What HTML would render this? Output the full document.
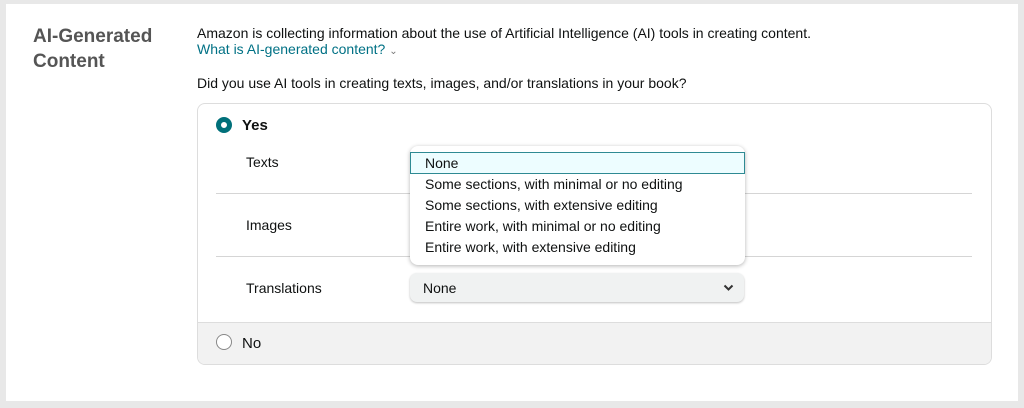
<!DOCTYPE html>
<html><head><style>
body{margin:0;width:1024px;height:408px;background:#e8e8e8;font-family:"Liberation Sans",Arial,sans-serif;color:#0f1111;position:relative;overflow:hidden}
.panel{position:absolute;left:6px;top:4px;width:1012px;height:397px;background:#fff}
.a{position:absolute;white-space:nowrap;font-size:14px}
h2{position:absolute;left:33px;top:24px;margin:0;font-size:19px;line-height:25px;color:#555;font-weight:bold}
.box{position:absolute;left:197px;top:103px;width:793px;height:260px;border:1px solid #ddd;border-radius:8px;overflow:hidden;background:#fff}
.no{position:absolute;left:0;right:0;bottom:0;height:41px;background:#f2f2f2;border-top:1px solid #ddd}
.line{position:absolute;left:216px;width:756px;height:1px;background:#d5d5d5}
.sel{position:absolute;left:410px;top:273px;width:334px;height:29px;background:#f0f2f2;border-radius:7px;box-shadow:0 1px 2px rgba(0,0,0,.25)}
.dd{position:absolute;left:410px;top:146px;width:335px;height:119px;background:#fff;border-radius:8px;box-shadow:0 1px 4px rgba(0,0,0,.3)}
.hl{position:absolute;left:410px;top:152px;width:333px;height:20px;background:#edfdff;border:1px solid #2e8a93}
</style></head><body>
<div class="panel"></div>
<h2>AI-Generated<br>Content</h2>
<div class="a" style="left:197px;top:25px">Amazon is collecting information about the use of Artificial Intelligence (AI) tools in creating content.</div>
<div class="a" style="left:197px;top:41px;color:#007185">What is AI-generated content? <span style="font-size:10px;color:#777">&#8964;</span></div>
<div class="a" style="left:197px;top:75px">Did you use AI tools in creating texts, images, and/or translations in your book?</div>
<div class="box"><div class="no"></div></div>
<div style="position:absolute;left:216px;top:117px;width:6px;height:6px;border:5px solid #00707a;border-radius:50%;background:#fff"></div>
<div class="a" style="left:242px;top:117px;font-weight:bold;font-size:15px">Yes</div>
<div class="a" style="left:246px;top:154px">Texts</div>
<div class="line" style="top:193px"></div>
<div class="a" style="left:246px;top:217px">Images</div>
<div class="line" style="top:256px"></div>
<div class="a" style="left:246px;top:280px">Translations</div>
<div class="sel"><span class="a" style="left:13px;top:7px">None</span>
<svg style="position:absolute;left:313px;top:11px" width="11" height="8" viewBox="0 0 11 8"><path d="M1.5 1.5L5.5 5.5L9.5 1.5" stroke="#333" stroke-width="2" fill="none"/></svg></div>
<div style="position:absolute;left:216px;top:334px;width:14px;height:14px;border:1px solid #888;border-radius:50%;background:#fff"></div>
<div class="a" style="left:242px;top:335px;font-size:15px">No</div>
<div class="dd"></div>
<div class="hl"></div>
<div class="a" style="left:425px;top:155px">None</div>
<div class="a" style="left:425px;top:176px">Some sections, with minimal or no editing</div>
<div class="a" style="left:425px;top:197px">Some sections, with extensive editing</div>
<div class="a" style="left:425px;top:218px">Entire work, with minimal or no editing</div>
<div class="a" style="left:425px;top:239px">Entire work, with extensive editing</div>
</body></html>
